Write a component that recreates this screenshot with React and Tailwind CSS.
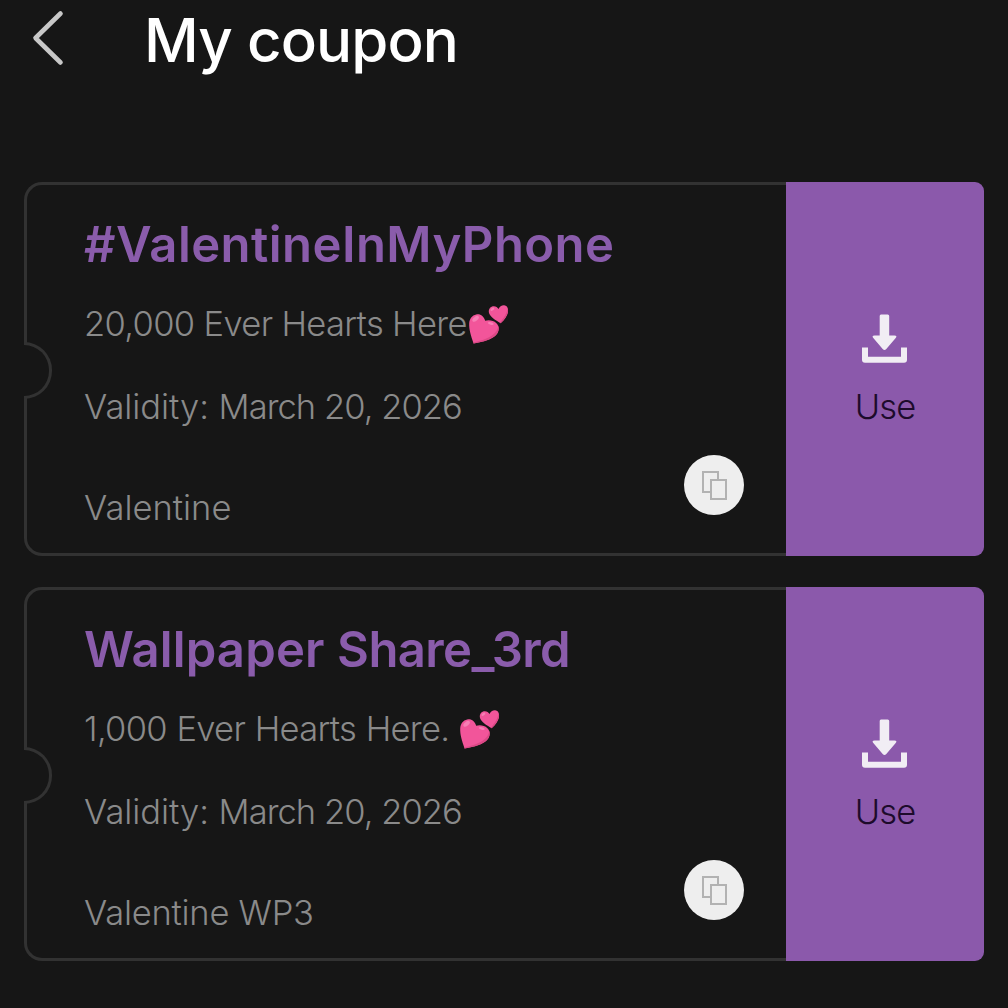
const coupons = [
  {
    title: [{ text: '#ValentineInMyPhone', className: 'tracking-[0.45px]' }],
    reward: '20,000 Ever Hearts Here',
    rewardClass: 'tracking-[-0.65px]',
    heartClass: 'ml-[1px]',
    validity: 'March 20, 2026',
    tag: 'Valentine',
    tagClass: 'tracking-[0px]',
  },
  {
    title: [
      { text: 'Wallpaper ', className: 'tracking-[0.15px]' },
      { text: 'Share_3rd', className: 'tracking-[-0.6px]' },
    ],
    reward: '1,000 Ever Hearts Here.',
    rewardClass: 'tracking-[-0.7px] [word-spacing:0.6px]',
    heartClass: 'ml-[10px]',
    validity: 'March 20, 2026',
    tag: 'Valentine WP3',
    tagClass: 'tracking-[-0.25px]',
  },
];

function BackIcon() {
  return (
    <svg width="34" height="58" viewBox="0 0 34 58" fill="none" stroke="#c8c8c8" strokeWidth="4.6" strokeLinecap="round" strokeLinejoin="round">
      <path d="M29.5 4.500 4.500 29 29.500 53.500" />
    </svg>
  );
}

function Hearts({ className }) {
  return (
    <svg className={className} width="41" height="41" viewBox="0 0 41 41" role="img" aria-label="two hearts">
      <path d="M5.6 39.4C2.5 31 1 25 1.2 19.5C1.4 14.5 4.2 11.2 8.2 10.4C12.6 9.6 15.7 12.2 17.2 16.8C20.8 15.7 25.5 16.4 28.4 19.2C31.8 22.5 31.3 27.7 27.8 31.3C23.5 35.6 16 37.7 5.6 39.4Z" fill="#f2559a" />
      <path d="M5.6 39.4C16 37.7 23.5 35.6 27.8 31.3C30.6 28.4 31.5 24.7 30.2 21.6C29.8 28 24.500 34.500 5.300 38.600Z" fill="#dc4886" />
      <ellipse cx="7.6" cy="14.800" rx="3.800" ry="2" transform="rotate(-38 7.6 14.8)" fill="#f77fb5" />
      <ellipse cx="22.8" cy="19.4" rx="3" ry="1.3" transform="rotate(12 22.8 19.4)" fill="#f77fb5" />
      <path d="M32.6 19.2C27.2 16.2 22.6 13.2 21.2 9.6C20 6.2 21.6 3 24.7 2.3C27.3 1.7 29.4 3 30.5 5.1C31.5 2.5 34.2 0.9 36.8 1.4C39.6 2 40.6 5 39.9 8.4C39 12.2 36.4 15.6 32.6 19.2Z" fill="#f2559a" />
      <path d="M32.6 19.2C36.4 15.6 39 12.2 39.9 8.4C40.2 6.8 40.1 5.3 39.6 4.1C39.2 9 36 14 31.8 18.700Z" fill="#dc4886" />
      <ellipse cx="24.4" cy="5.3" rx="2.2" ry="1.2" transform="rotate(-35 24.4 5.3)" fill="#f77fb5" />
    </svg>
  );
}

function DownloadIcon() {
  return (
    <svg width="46" height="50" viewBox="0 0 46 50" fill="#f1edf4">
      <path d="M19 0.500H25.700Q27.200 0.500 27.200 2V21.500H32.500Q35.600 21.500 33.700 24L24.300 35Q22.500 37 20.700 35L11.300 24Q9.400 21.500 12.500 21.500H17.700V2Q17.700 0.500 19 0.500Z" />
      <path d="M0 33.500H6V42.700H39V33.500H45V45.700Q45 48.700 42 48.700H3Q0 48.700 0 45.700Z" />
    </svg>
  );
}

function CopyIcon() {
  return (
    <svg width="26" height="30" viewBox="0 0 26 30" fill="#eeeeee" stroke="#b2b2b2" strokeWidth="2">
      <path d="M2 2H17V22H2Z" />
      <path d="M10 10H25V29H10Z" />
    </svg>
  );
}

function Coupon({ coupon }) {
  return (
    <article className="relative flex h-[374px]">
      <div className="flex flex-1 rounded-l-[18px] border-[3px] border-r-0 border-[#323232]">
        <div className="flex flex-1 flex-col pl-[57px] pt-[30px] whitespace-nowrap text-[#8a8a8a]">
          <h2 className="h-[60px] text-[49px] leading-[60px] font-semibold text-[#8a5cab]">
            {coupon.title.map((part) => (
              <span key={part.text} className={part.className}>{part.text}</span>
            ))}
          </h2>
          <div className="mt-[29px] flex h-10 items-center">
            <p className={`text-[34.500px] leading-10 font-[330] ${coupon.rewardClass}`}>{coupon.reward}</p>
            <Hearts className={coupon.heartClass} />
          </div>
          <p className="mt-[43px] text-[34.500px] leading-10 font-[330] tracking-[-0.95px]">
            <span className="tracking-[-0.05px]">Validity: </span>
            {coupon.validity}
          </p>
          <p className={`mt-[61px] text-[34.500px] leading-10 font-[330] ${coupon.tagClass}`}>{coupon.tag}</p>
        </div>
        <button className="mr-[42px] mb-[38px] flex size-[60px] items-center justify-center self-end rounded-full bg-[#eeeeee]" aria-label="Copy">
          <CopyIcon />
        </button>
      </div>
      <button className="flex w-[198px] flex-col items-center rounded-r-[9px] bg-[#8b59ab] pt-[132px]">
        <DownloadIcon />
        <span className="mt-[23px] text-[34.500px] leading-10 font-[330] tracking-[-0.9px] text-[#1d0b2b]">Use</span>
      </button>
      <span className="absolute top-[160px] left-0 h-[57px] w-[28px] rounded-r-full border-[3px] border-l-0 border-[#323232] bg-[#161616]" />
    </article>
  );
}

export default function App() {
  return (
    <main className="h-[1008px] w-[1008px] overflow-hidden bg-[#161616] font-['Inter','Liberation_Sans',sans-serif]">
      <header className="flex h-[80px] items-start pl-[31px]">
        <button className="mt-[9px]" aria-label="Back">
          <BackIcon />
        </button>
        <h1 className="ml-[79px] text-[60px] leading-[80px] font-medium tracking-[-0.9px] text-white">My coupon</h1>
      </header>
      <section className="mt-[102px] flex flex-col gap-[31px] px-6">
        {coupons.map((c) => (
          <Coupon key={c.tag} coupon={c} />
        ))}
      </section>
    </main>
  );
}
